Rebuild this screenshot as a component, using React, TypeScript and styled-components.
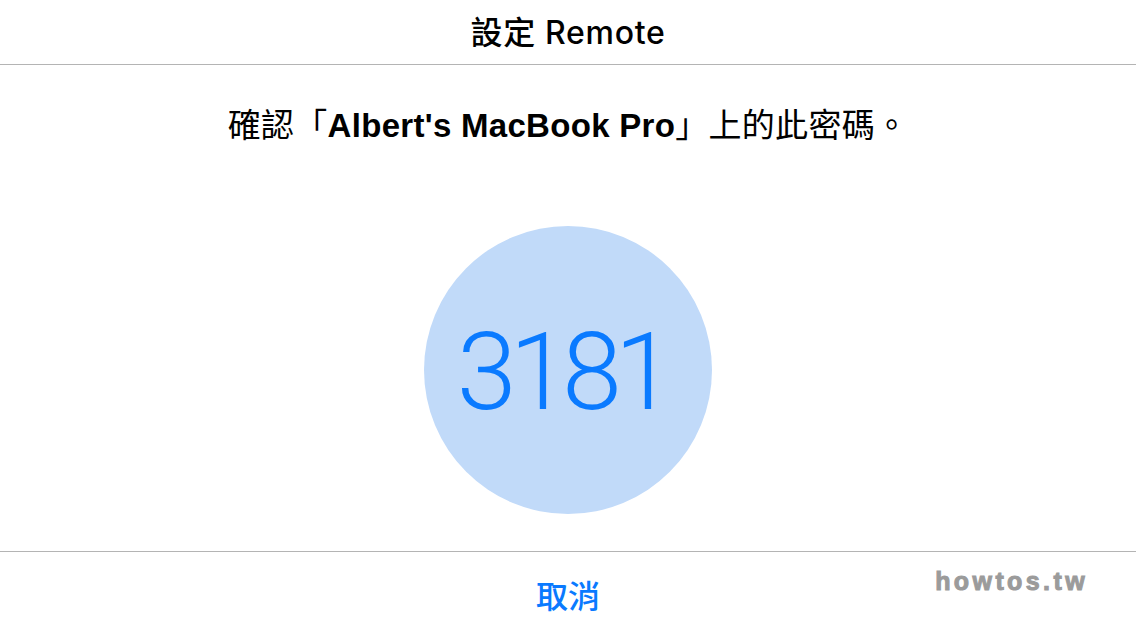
import React from 'react';
import styled, { createGlobalStyle } from 'styled-components';

const GlobalStyle = createGlobalStyle`
  html, body {
    margin: 0;
    padding: 0;
    background: #ffffff;
  }
  body {
    font-family: "Liberation Sans", "Noto Sans CJK TC", sans-serif;
  }
`;

const Screen = styled.div`
  position: relative;
  width: 1136px;
  height: 640px;
  display: flex;
  flex-direction: column;
  background: #ffffff;
  overflow: hidden;
`;

const Header = styled.header`
  height: 64px;
  border-bottom: 1px solid #b4b4b4;
  display: flex;
  align-items: center;
  justify-content: center;
  box-sizing: content-box;
`;

const Title = styled.h1`
  margin: -5px 0 0;
  font-size: 32px;
  font-weight: 500;
  color: #000;
  font-family: "Inter", "Noto Sans CJK TC", sans-serif;
  letter-spacing: 0.7px;
`;

const Body = styled.main`
  flex: 1;
  display: flex;
  flex-direction: column;
  align-items: center;
  border-bottom: 1px solid #b4b4b4;
`;

const Prompt = styled.p`
  margin: 42px 0 0;
  font-size: 33px;
  line-height: 38px;
  letter-spacing: 0.3px;
  color: #000;
  font-family: "Liberation Sans", "Noto Sans CJK TC", sans-serif;
`;

const DeviceName = styled.strong`
  font-weight: 700;
`;

const Circle = styled.div`
  margin-top: 81px;
  width: 288px;
  height: 288px;
  border-radius: 50%;
  background: #c1daf9;
  display: flex;
  align-items: center;
  justify-content: center;
`;

const Code = styled.span`
  font-family: "Roboto", "Liberation Sans", sans-serif;
  font-weight: 300;
  font-size: 108px;
  letter-spacing: -7.3px;
  color: #0a7aff;
  line-height: 1;
  margin-top: 3px;
  margin-right: 12px;
`;

const Footer = styled.footer`
  height: 88px;
  display: flex;
  align-items: center;
  justify-content: center;
`;

const CancelButton = styled.button`
  border: none;
  background: none;
  padding: 0;
  margin-top: -5px;
  font-size: 32px;
  font-weight: 500;
  color: #0a7aff;
  font-family: "Noto Sans CJK TC", sans-serif;
  cursor: pointer;
`;

const Watermark = styled.div`
  position: absolute;
  right: 48px;
  bottom: 44px;
  font-family: "Liberation Sans", sans-serif;
  font-weight: 700;
  font-size: 25px;
  color: #9b9b9b;
  letter-spacing: 3.4px;
  -webkit-text-stroke: 1px #9b9b9b;
`;

const App: React.FC = () => {
  return (
    <Screen>
      <GlobalStyle />
      <Header>
        <Title>設定 Remote</Title>
      </Header>
      <Body>
        <Prompt>
          確認「<DeviceName>Albert's MacBook Pro</DeviceName>」上的此密碼。
        </Prompt>
        <Circle>
          <Code>3181</Code>
        </Circle>
      </Body>
      <Footer>
        <CancelButton>取消</CancelButton>
      </Footer>
      <Watermark>howtos.tw</Watermark>
    </Screen>
  );
};

export default App;
